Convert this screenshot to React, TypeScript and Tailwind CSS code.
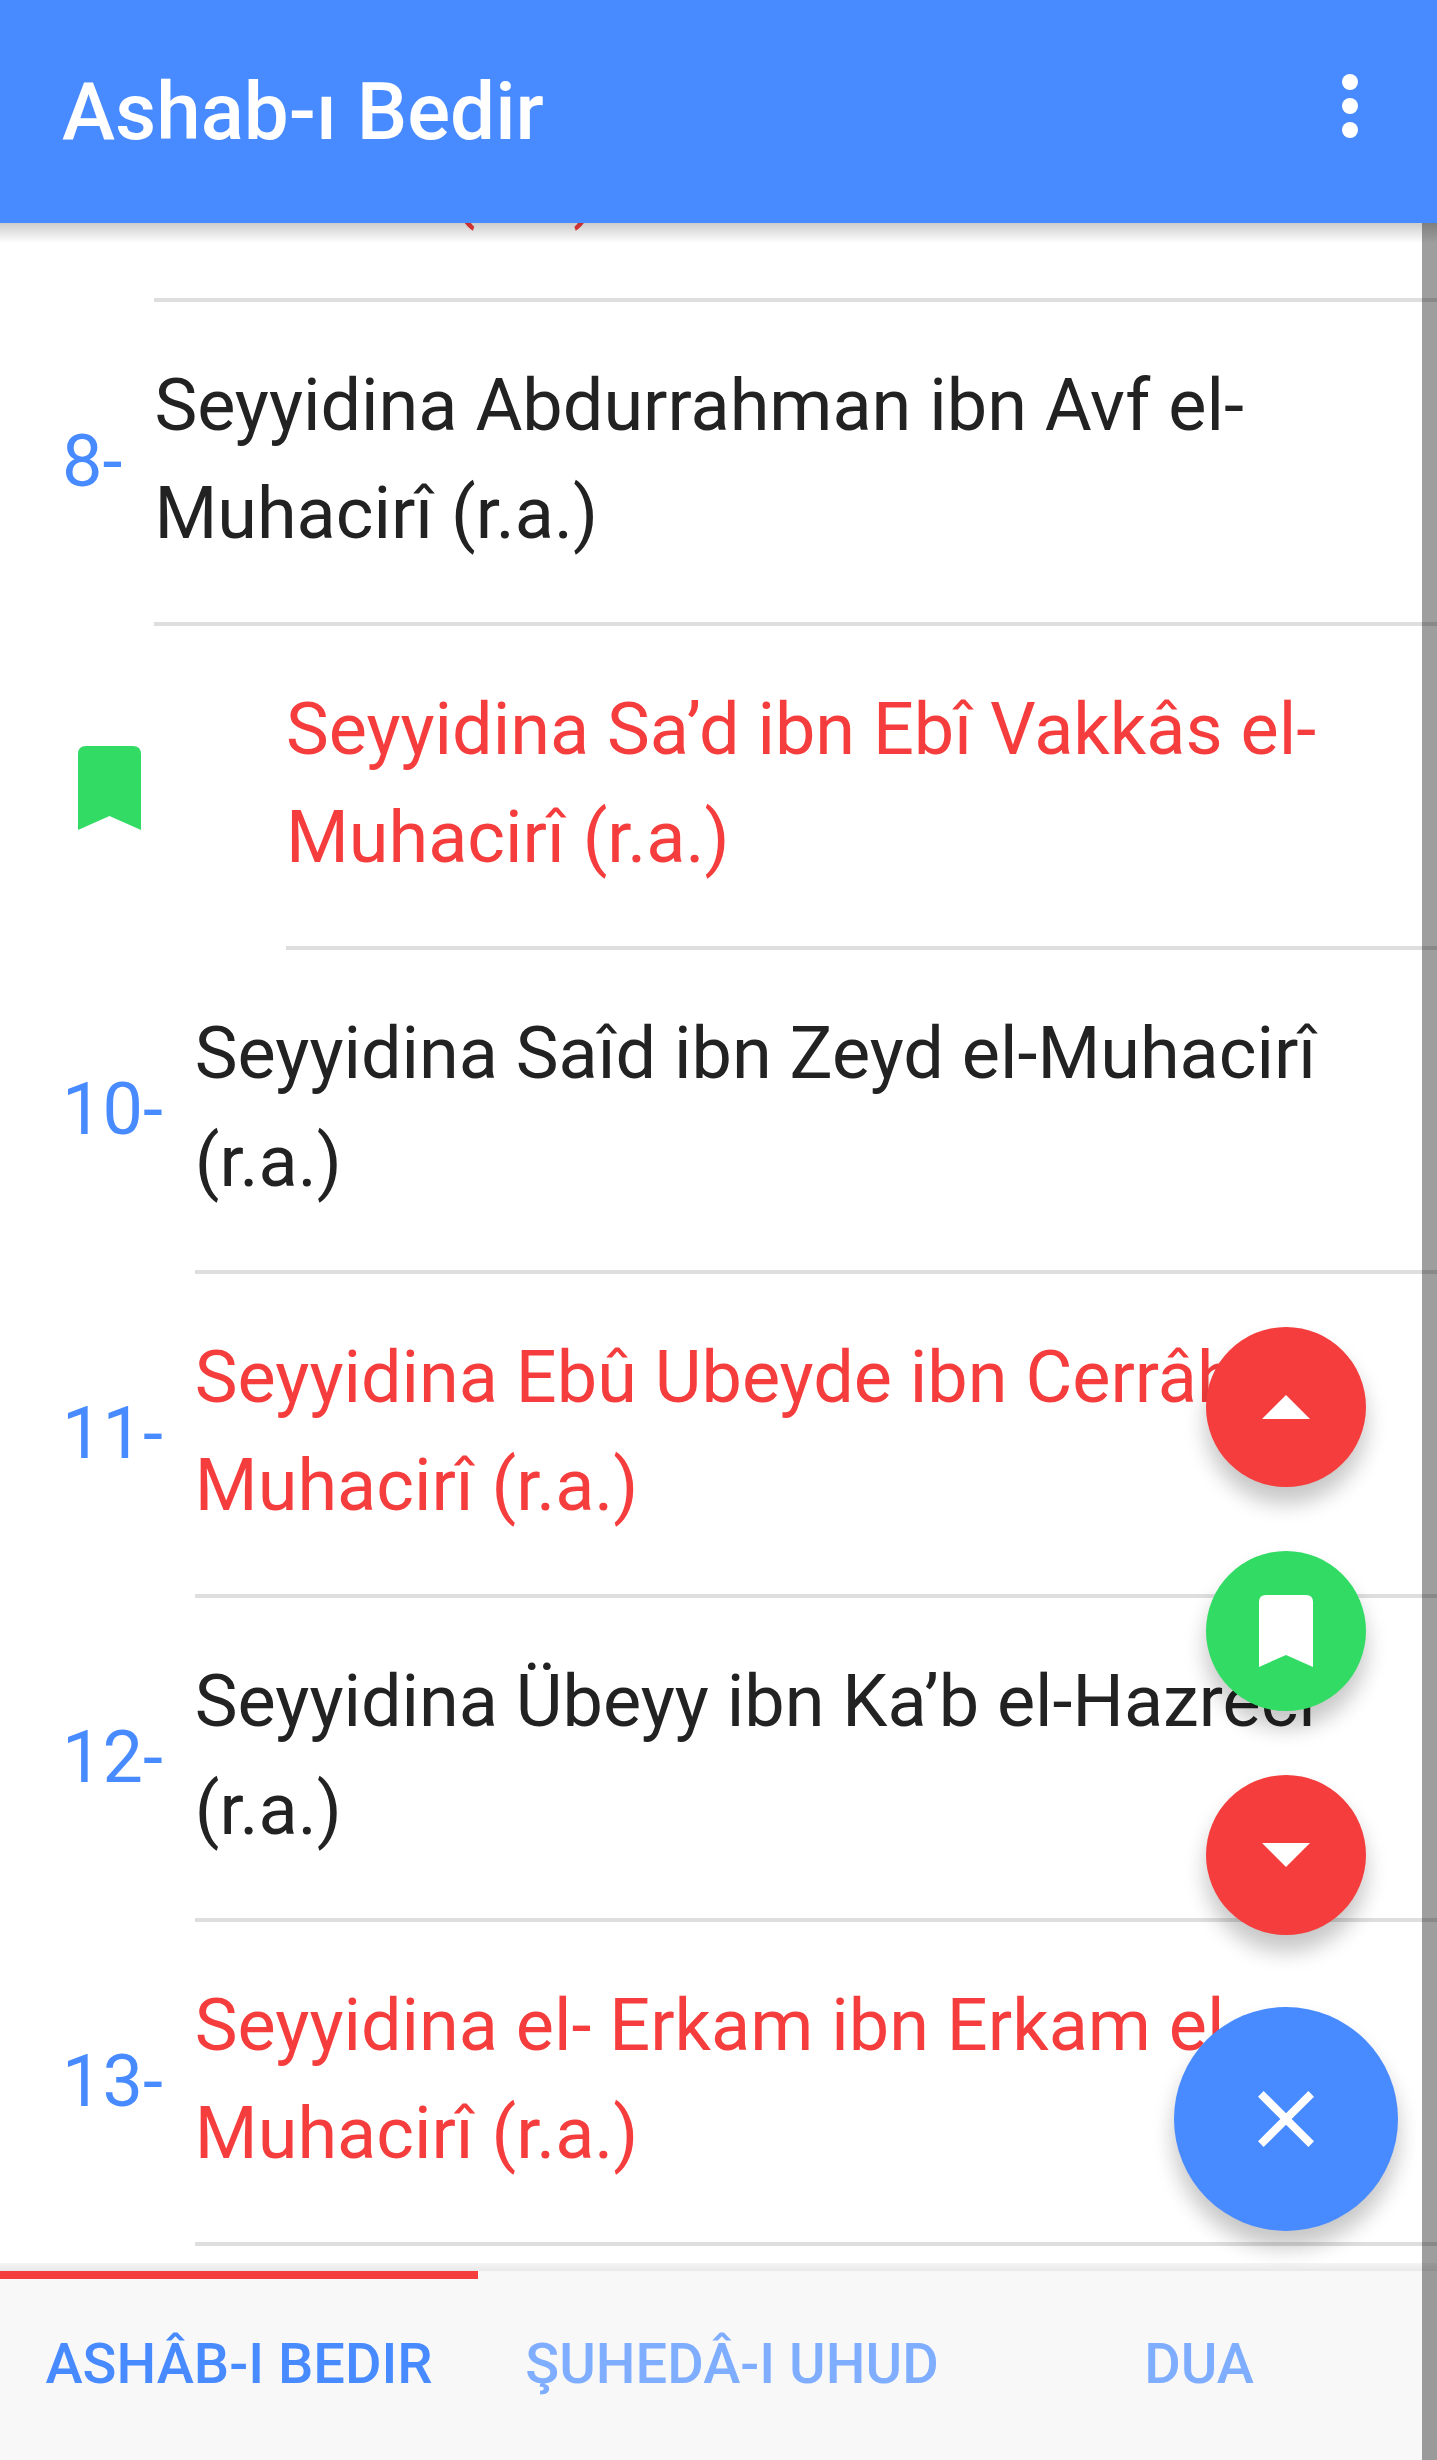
import React from 'react';
import {MdClose} from "react-icons/md";

type Person = {
    no: number;
    name: string;
    bookmarked?: boolean;
};

const people: Person[] = [
    {no: 7, name: "Seyyidina Zübeyr ibn Avvâm el-Muhacirî (r.a.)"},
    {no: 8, name: "Seyyidina Abdurrahman ibn Avf el-Muhacirî (r.a.)"},
    {no: 9, name: "Seyyidina Sa’d ibn Ebî Vakkâs el-Muhacirî (r.a.)", bookmarked: true},
    {no: 10, name: "Seyyidina Saîd ibn Zeyd el-Muhacirî (r.a.)"},
    {no: 11, name: "Seyyidina Ebû Ubeyde ibn Cerrâh el-Muhacirî (r.a.)"},
    {no: 12, name: "Seyyidina Übeyy ibn Ka’b el-Hazrecî (r.a.)"},
    {no: 13, name: "Seyyidina el- Erkam ibn Erkam el-Muhacirî (r.a.)"},
];

const tabs = ["ASHÂB-I BEDIR", "ŞUHEDÂ-I UHUD", "DUA"];

const BookmarkIcon = ({className}: { className: string }) => (
    <svg viewBox="0 0 54 72" className={className} fill="currentColor" aria-hidden="true">
        <path d="M7 0H47Q54 0 54 7V72L27 60L0 72V7Q0 0 7 0Z"/>
    </svg>
);

const Header = () => {
    return (
        <header className="flex h-[223px] shrink-0 items-center justify-between bg-[#488aff] pl-[62px] pr-[63px] text-white">
            <h1 className="text-[80px] leading-none font-medium">Ashab-ı Bedir</h1>
            <button type="button" aria-label="Menü" className="flex w-12 flex-col items-center gap-2 pb-3">
                <span className="size-4 rounded-full bg-white"/>
                <span className="size-4 rounded-full bg-white"/>
                <span className="size-4 rounded-full bg-white"/>
            </button>
        </header>
    );
};

const Row = ({person}: { person: Person }) => {
    const color = person.no % 2 ? "text-[#f53d3d]" : "text-[#222222]";

    return (
        <li className="flex shrink-0 pl-[62px] text-[72px] leading-[108px]">
            <div className="flex shrink-0 items-center pb-1 text-[#488aff]">
                {person.bookmarked
                    ? <BookmarkIcon className="mt-1 mr-[145px] ml-4 h-[84px] w-[63px] text-[#32db64]"/>
                    : <span className="mr-8">{person.no}-</span>}
            </div>
            <div className={`flex-1 border-b-4 border-[#dedede] pt-[50px] pr-16 pb-[54px] ${color}`}>
                {person.name}
            </div>
        </li>
    );
};

const fab = "flex items-center justify-center rounded-full text-white shadow-[0_16px_24px_rgba(0,0,0,0.14),0_16px_20px_rgba(0,0,0,0.1)]";

const FabMenu = () => {
    return (
        <div className="absolute right-[39px] bottom-10 flex flex-col items-center">
            <button type="button" aria-label="Yukarı" className={`${fab} mb-16 size-40 bg-[#f53d3d]`}>
                <svg viewBox="0 0 48 24" className="h-6 w-12" fill="currentColor"><path d="M0 24L24 0L48 24Z"/></svg>
            </button>
            <button type="button" aria-label="Yer imi" className={`${fab} mb-16 size-40 bg-[#32db64]`}>
                <BookmarkIcon className="h-[72px] w-[54px]"/>
            </button>
            <button type="button" aria-label="Aşağı" className={`${fab} mb-18 size-40 bg-[#f53d3d]`}>
                <svg viewBox="0 0 48 24" className="h-6 w-12" fill="currentColor"><path d="M0 0H48L24 24Z"/></svg>
            </button>
            <button type="button" aria-label="Kapat" className={`${fab} size-56 bg-[#488aff]`}>
                <MdClose className="size-24"/>
            </button>
        </div>
    );
};

const TabBar = () => {
    return (
        <nav className="grid h-[189px] shrink-0 grid-cols-[478fr_508fr_426fr] bg-[#f8f8f8] pr-[25px]">
            {tabs.map((tab, i) => (
                <button
                    key={tab}
                    type="button"
                    className={`border-t-8 pb-3 text-[56px] leading-none font-medium whitespace-nowrap ${i === 0 ? "border-[#f53d3d] text-[#488aff]" : "border-transparent text-[#7fadff]"}`}>
                    {tab}
                </button>
            ))}
        </nav>
    );
};

export default function App() {
    return (
        <div className="relative flex h-screen flex-col overflow-hidden bg-white font-['Roboto',sans-serif]">
            <Header/>

            <main className="relative flex min-h-0 flex-1 flex-col overflow-hidden">
                {/* the list is scrolled, so it hangs from the bottom edge */}
                <ul className="flex min-h-0 flex-1 flex-col justify-end pb-[25px]">
                    {people.map(person => <Row key={person.no} person={person}/>)}
                </ul>
                <div className="absolute inset-x-0 top-0 h-5 bg-linear-to-b from-black/20 via-black/10 to-transparent"/>
                <div className="absolute inset-x-0 bottom-0 h-2 bg-linear-to-b from-black/4 to-black/9"/>
                <FabMenu/>
            </main>

            <TabBar/>

            {/* scroll thumb */}
            <div className="absolute top-[223px] right-0 bottom-0 w-[15px] bg-black/38"/>
        </div>
    );
}
